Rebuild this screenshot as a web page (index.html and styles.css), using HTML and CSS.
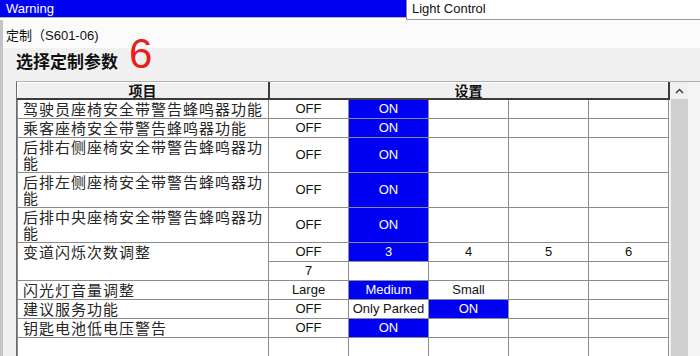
FILE: index.html
```html
<!DOCTYPE html>
<html lang="zh-CN">
<head>
<meta charset="utf-8">
<title>Light Control</title>
<link rel="stylesheet" href="styles.css">
</head>
<body>
<div class="top">
  <div class="warn">Warning</div>
  <div class="tab">Light Control</div>
</div>
<div class="main">
  <div class="sub">定制（S601-06)</div>
  <div class="heading">选择定制参数</div>
  <div class="list">
    <table class="grid">
      <colgroup>
        <col class="c-item"><col class="c-val"><col class="c-val"><col class="c-val"><col class="c-val"><col class="c-val">
      </colgroup>
      <thead>
        <tr><th class="h-item">项目</th><th class="h-set" colspan="5">设置</th></tr>
      </thead>
      <tbody>
        <tr><td class="item">驾驶员座椅安全带警告蜂鸣器功能</td><td>OFF</td><td class="sel">ON</td><td></td><td></td><td></td></tr>
        <tr><td class="item">乘客座椅安全带警告蜂鸣器功能</td><td>OFF</td><td class="sel">ON</td><td></td><td></td><td></td></tr>
        <tr><td class="item">后排右侧座椅安全带警告蜂鸣器功能</td><td>OFF</td><td class="sel">ON</td><td></td><td></td><td></td></tr>
        <tr><td class="item">后排左侧座椅安全带警告蜂鸣器功能</td><td>OFF</td><td class="sel">ON</td><td></td><td></td><td></td></tr>
        <tr><td class="item">后排中央座椅安全带警告蜂鸣器功能</td><td>OFF</td><td class="sel">ON</td><td></td><td></td><td></td></tr>
        <tr><td class="item" rowspan="2">变道闪烁次数调整</td><td>OFF</td><td class="sel">3</td><td>4</td><td>5</td><td>6</td></tr>
        <tr><td>7</td><td></td><td></td><td></td><td></td></tr>
        <tr><td class="item">闪光灯音量调整</td><td>Large</td><td class="sel">Medium</td><td>Small</td><td></td><td></td></tr>
        <tr><td class="item">建议服务功能</td><td>OFF</td><td>Only Parked</td><td class="sel">ON</td><td></td><td></td></tr>
        <tr><td class="item">钥匙电池低电压警告</td><td>OFF</td><td class="sel">ON</td><td></td><td></td><td></td></tr>
        <tr><td class="item">&nbsp;</td><td></td><td></td><td></td><td></td><td></td></tr>
      </tbody>
    </table>
    <div class="scroll">
      <div class="arrow">
        <svg width="9" height="6" viewBox="0 0 9 6"><path d="M1 5 L4.5 1.5 L8 5" fill="none" stroke="#404040" stroke-width="1.5"/></svg>
      </div>
      <div class="track"></div>
    </div>
    <div class="edge"></div>
  </div>
</div>
<span class="anno">6</span>
</body>
</html>
```

FILE: styles.css
```css
html, body {
  margin: 0;
  padding: 0;
}
body {
  width: 700px;
  height: 356px;
  overflow: hidden;
  background: #f0f0f0;
  font-family: "Liberation Sans", Arial, sans-serif;
  color: #111;
}
.top {
  display: flex;
  height: 20px;
  background: #fff;
}
.warn {
  width: 406px;
  height: 18px;
  background: #0000f2;
  color: #fff;
  font-size: 13px;
  line-height: 18px;
  padding-left: 6px;
  box-sizing: border-box;
  border-bottom: 1px solid #b5b5b5;
}
.tab {
  flex: 1;
  height: 20px;
  box-sizing: border-box;
  background: #fff;
  border-left: 1px solid #8a8a8a;
  border-bottom: 1px solid #9a9a9a;
  font-size: 13px;
  line-height: 18px;
  padding-left: 5px;
  color: #111;
}
.main {
  border-left: 3px solid #c4c4c4;
}
.sub {
  height: 28px;
  box-sizing: border-box;
  background: #fbfbfb;
  font-family: "Liberation Sans", "Noto Sans CJK SC", sans-serif;
  font-size: 13px;
  line-height: 16px;
  padding: 8px 0 0 3px;
  color: #111;
}
.heading {
  height: 33px;
  box-sizing: border-box;
  padding: 2px 0 0 13px;
  font-family: "Noto Sans CJK SC", sans-serif;
  font-weight: 700;
  font-size: 17px;
  line-height: 22px;
  color: #111;
}
.anno {
  position: absolute;
  left: 129px;
  top: 33px;
  font-family: "Liberation Sans", Arial, sans-serif;
  font-size: 42px;
  line-height: 42px;
  color: #e8201c;
}
.list {
  display: flex;
  margin-left: 13px;
  border-top: 1px solid #b0b0b0;
  border-left: 1px solid #6c6c6c;
  height: 280px;
  overflow: hidden;
}
.grid {
  border-collapse: collapse;
  table-layout: fixed;
  width: 652px;
  background: #fff;
  align-self: flex-start;
}
.c-item { width: 251px; }
.c-val { width: 80px; }
.grid th {
  height: 15px;
  padding: 0;
  background: #f0f0f0;
  font-family: "Noto Sans CJK SC", sans-serif;
  font-weight: 700;
  font-size: 14px;
  line-height: 15px;
  color: #111;
  border-top: 1px solid #fff;
  border-bottom: 2px solid #3c3c3c;
  border-right: 2px solid #3c3c3c;
}
.grid td {
  border: 1px solid #8c8c8c;
  padding: 1px 0;
  height: 16px;
  text-align: center;
  vertical-align: middle;
  font-size: 13px;
  line-height: 16px;
  color: #111;
}
.grid td.item {
  text-align: left;
  vertical-align: top;
  padding: 1px 2px 1px 5px;
  font-family: "Noto Sans CJK SC", sans-serif;
  font-size: 15px;
  letter-spacing: 1px;
  color: #262626;
}
.grid td.sel {
  background: #0000f2;
  color: #fff;
}
.scroll {
  width: 17px;
  margin-left: 1px;
  display: flex;
  flex-direction: column;
}
.arrow {
  height: 17px;
  display: flex;
  align-items: center;
  justify-content: center;
  background: #f0f0f0;
}
.track {
  flex: 1;
  background: #cfcfcf;
}
.edge {
  flex: 1;
  background: #f5f5f5;
}
```
